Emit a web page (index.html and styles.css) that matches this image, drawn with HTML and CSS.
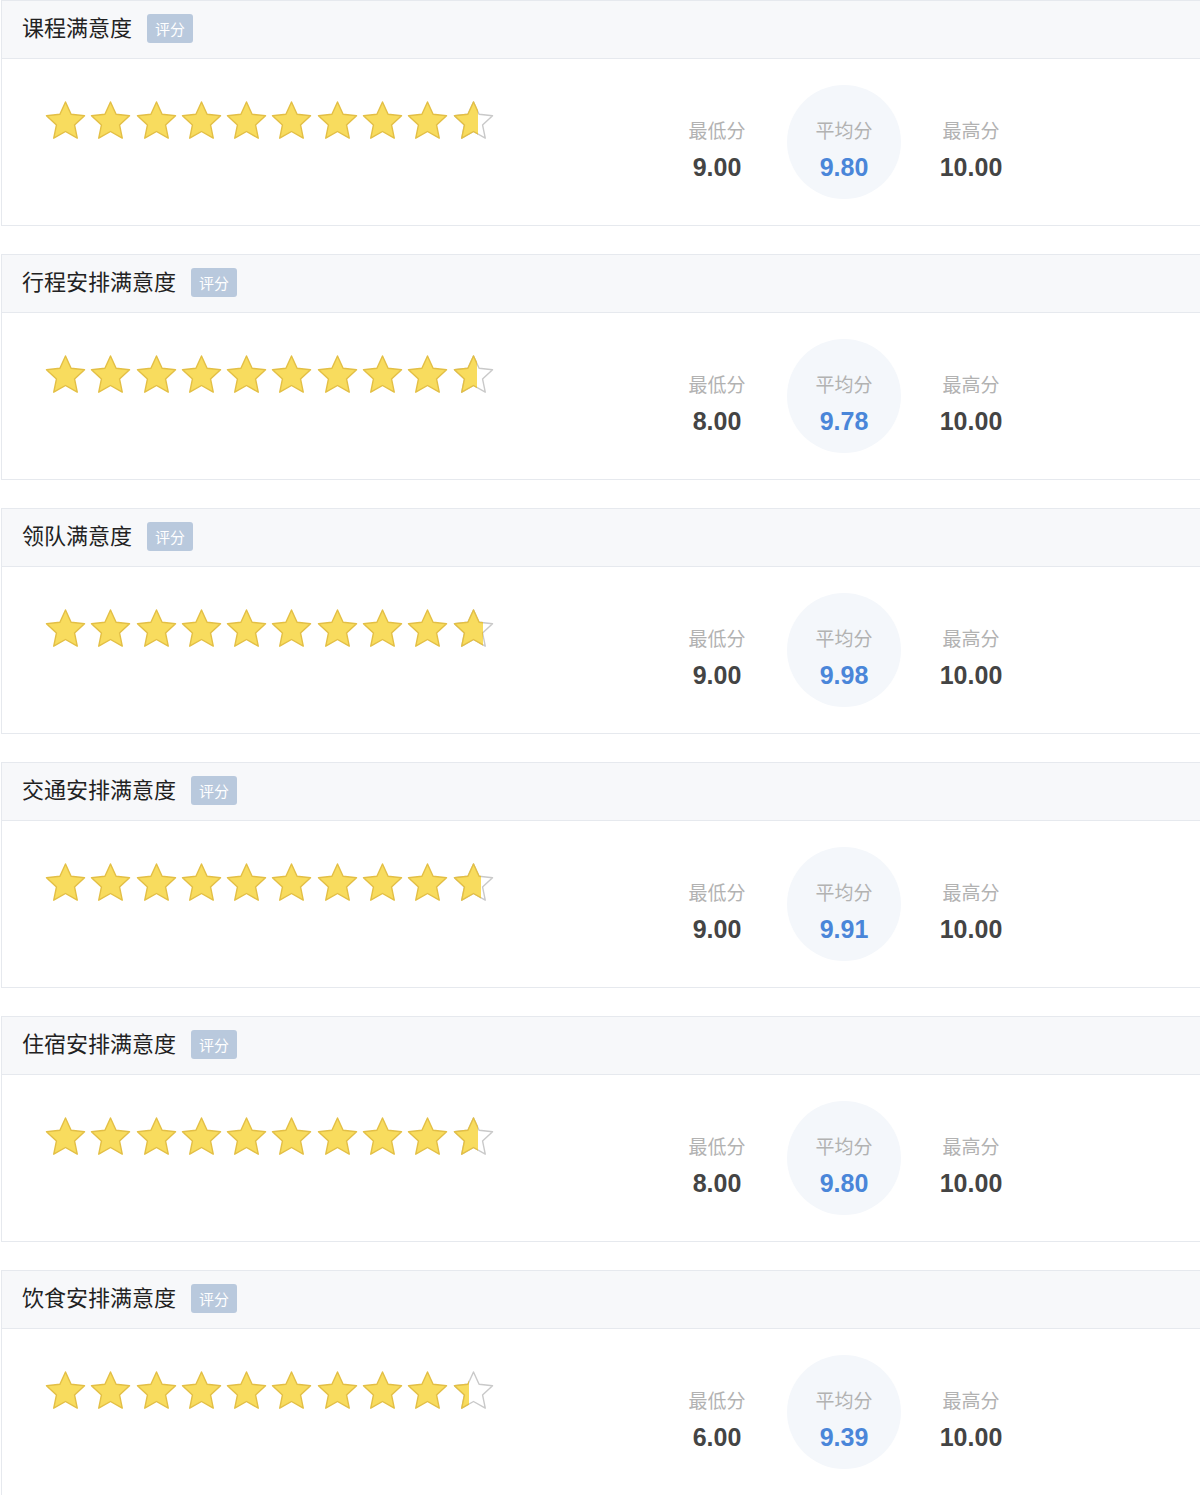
FILE: index.html
```html
<!DOCTYPE html>
<html lang="zh">
<head>
<meta charset="utf-8">
<link rel="stylesheet" href="styles.css">
</head>
<body>
<svg class="defs" width="0" height="0" aria-hidden="true">
  <defs>
    <polygon id="star" points="22.5,2 28.08,14.31 41.52,15.82 31.54,24.94 34.26,38.18 22.5,31.5 10.74,38.18 13.46,24.94 3.48,15.82 16.92,14.31"/>
  </defs>
</svg>
<div class="page">

  <section class="card">
    <div class="card-head"><span class="title">课程满意度</span><span class="badge">评分</span></div>
    <div class="card-body">
      <div class="stars">
        <svg class="star full"><use href="#star"/></svg><svg class="star full"><use href="#star"/></svg><svg class="star full"><use href="#star"/></svg><svg class="star full"><use href="#star"/></svg><svg class="star full"><use href="#star"/></svg><svg class="star full"><use href="#star"/></svg><svg class="star full"><use href="#star"/></svg><svg class="star full"><use href="#star"/></svg><svg class="star full"><use href="#star"/></svg>
        <span class="partial"><svg class="star empty"><use href="#star"/></svg><span class="clip" style="width:27px"><svg class="star full"><use href="#star"/></svg></span></span>
      </div>
      <div class="stats">
        <div class="stat"><div class="label">最低分</div><div class="value">9.00</div></div>
        <div class="stat avg"><div class="label">平均分</div><div class="value">9.80</div></div>
        <div class="stat"><div class="label">最高分</div><div class="value">10.00</div></div>
      </div>
    </div>
  </section>

  <section class="card">
    <div class="card-head"><span class="title">行程安排满意度</span><span class="badge">评分</span></div>
    <div class="card-body">
      <div class="stars">
        <svg class="star full"><use href="#star"/></svg><svg class="star full"><use href="#star"/></svg><svg class="star full"><use href="#star"/></svg><svg class="star full"><use href="#star"/></svg><svg class="star full"><use href="#star"/></svg><svg class="star full"><use href="#star"/></svg><svg class="star full"><use href="#star"/></svg><svg class="star full"><use href="#star"/></svg><svg class="star full"><use href="#star"/></svg>
        <span class="partial"><svg class="star empty"><use href="#star"/></svg><span class="clip" style="width:26.5px"><svg class="star full"><use href="#star"/></svg></span></span>
      </div>
      <div class="stats">
        <div class="stat"><div class="label">最低分</div><div class="value">8.00</div></div>
        <div class="stat avg"><div class="label">平均分</div><div class="value">9.78</div></div>
        <div class="stat"><div class="label">最高分</div><div class="value">10.00</div></div>
      </div>
    </div>
  </section>

  <section class="card">
    <div class="card-head"><span class="title">领队满意度</span><span class="badge">评分</span></div>
    <div class="card-body">
      <div class="stars">
        <svg class="star full"><use href="#star"/></svg><svg class="star full"><use href="#star"/></svg><svg class="star full"><use href="#star"/></svg><svg class="star full"><use href="#star"/></svg><svg class="star full"><use href="#star"/></svg><svg class="star full"><use href="#star"/></svg><svg class="star full"><use href="#star"/></svg><svg class="star full"><use href="#star"/></svg><svg class="star full"><use href="#star"/></svg>
        <span class="partial"><svg class="star empty"><use href="#star"/></svg><span class="clip" style="width:32px"><svg class="star full"><use href="#star"/></svg></span></span>
      </div>
      <div class="stats">
        <div class="stat"><div class="label">最低分</div><div class="value">9.00</div></div>
        <div class="stat avg"><div class="label">平均分</div><div class="value">9.98</div></div>
        <div class="stat"><div class="label">最高分</div><div class="value">10.00</div></div>
      </div>
    </div>
  </section>

  <section class="card">
    <div class="card-head"><span class="title">交通安排满意度</span><span class="badge">评分</span></div>
    <div class="card-body">
      <div class="stars">
        <svg class="star full"><use href="#star"/></svg><svg class="star full"><use href="#star"/></svg><svg class="star full"><use href="#star"/></svg><svg class="star full"><use href="#star"/></svg><svg class="star full"><use href="#star"/></svg><svg class="star full"><use href="#star"/></svg><svg class="star full"><use href="#star"/></svg><svg class="star full"><use href="#star"/></svg><svg class="star full"><use href="#star"/></svg>
        <span class="partial"><svg class="star empty"><use href="#star"/></svg><span class="clip" style="width:30.5px"><svg class="star full"><use href="#star"/></svg></span></span>
      </div>
      <div class="stats">
        <div class="stat"><div class="label">最低分</div><div class="value">9.00</div></div>
        <div class="stat avg"><div class="label">平均分</div><div class="value">9.91</div></div>
        <div class="stat"><div class="label">最高分</div><div class="value">10.00</div></div>
      </div>
    </div>
  </section>

  <section class="card">
    <div class="card-head"><span class="title">住宿安排满意度</span><span class="badge">评分</span></div>
    <div class="card-body">
      <div class="stars">
        <svg class="star full"><use href="#star"/></svg><svg class="star full"><use href="#star"/></svg><svg class="star full"><use href="#star"/></svg><svg class="star full"><use href="#star"/></svg><svg class="star full"><use href="#star"/></svg><svg class="star full"><use href="#star"/></svg><svg class="star full"><use href="#star"/></svg><svg class="star full"><use href="#star"/></svg><svg class="star full"><use href="#star"/></svg>
        <span class="partial"><svg class="star empty"><use href="#star"/></svg><span class="clip" style="width:27px"><svg class="star full"><use href="#star"/></svg></span></span>
      </div>
      <div class="stats">
        <div class="stat"><div class="label">最低分</div><div class="value">8.00</div></div>
        <div class="stat avg"><div class="label">平均分</div><div class="value">9.80</div></div>
        <div class="stat"><div class="label">最高分</div><div class="value">10.00</div></div>
      </div>
    </div>
  </section>

  <section class="card">
    <div class="card-head"><span class="title">饮食安排满意度</span><span class="badge">评分</span></div>
    <div class="card-body">
      <div class="stars">
        <svg class="star full"><use href="#star"/></svg><svg class="star full"><use href="#star"/></svg><svg class="star full"><use href="#star"/></svg><svg class="star full"><use href="#star"/></svg><svg class="star full"><use href="#star"/></svg><svg class="star full"><use href="#star"/></svg><svg class="star full"><use href="#star"/></svg><svg class="star full"><use href="#star"/></svg><svg class="star full"><use href="#star"/></svg>
        <span class="partial"><svg class="star empty"><use href="#star"/></svg><span class="clip" style="width:18px"><svg class="star full"><use href="#star"/></svg></span></span>
      </div>
      <div class="stats">
        <div class="stat"><div class="label">最低分</div><div class="value">6.00</div></div>
        <div class="stat avg"><div class="label">平均分</div><div class="value">9.39</div></div>
        <div class="stat"><div class="label">最高分</div><div class="value">10.00</div></div>
      </div>
    </div>
  </section>

</div>
</body>
</html>
```

FILE: styles.css
```css
html, body {
  margin: 0;
  padding: 0;
  background: #ffffff;
  overflow-x: hidden;
}

body {
  font-family: "Liberation Sans", "Noto Sans CJK SC", sans-serif;
}

.defs {
  position: absolute;
  width: 0;
  height: 0;
  overflow: hidden;
}

.page {
  padding-left: 1px;
  display: flex;
  flex-direction: column;
  gap: 28px;
}

.card {
  border: 1px solid #e6e9ee;
  border-right: none;
  background: #fff;
}

.card-head {
  height: 58px;
  box-sizing: border-box;
  padding-bottom: 6px;
  background: #f7f8fa;
  border-bottom: 1px solid #e6e9ee;
  display: flex;
  align-items: center;
  padding-left: 20px;
}

.title {
  font-family: "Noto Sans CJK SC", sans-serif;
  font-size: 22px;
  color: #222;
  line-height: 30px;
  margin-bottom: 2px;
}

.badge {
  margin-left: 15px;
  margin-top: 3px;
  height: 29px;
  width: 46px;
  box-sizing: border-box;
  border-radius: 3px;
  background: #b9c9dd;
  color: #ffffff;
  font-family: "Noto Sans CJK SC", sans-serif;
  font-size: 15px;
  line-height: 29px;
  text-align: center;
}

.card-body {
  height: 166px;
  display: flex;
  align-items: flex-start;
}

.stars {
  display: flex;
  padding-left: 41px;
  padding-top: 41px;
  width: 453px;
}

.star {
  width: 45.3px;
  height: 42px;
  flex: none;
  display: block;
  overflow: visible;
}

.star use {
  stroke-width: 1.4;
  stroke-linejoin: round;
}

.star.full use {
  fill: #f8dc5e;
  stroke: #e3bf45;
}

.star.empty use {
  fill: #ffffff;
  stroke: #c9c9c9;
}

.partial {
  position: relative;
  display: block;
  width: 45.3px;
  height: 42px;
}

.clip {
  position: absolute;
  left: 0;
  top: 0;
  height: 42px;
  overflow: hidden;
}

.stats {
  margin-left: 164px;
  align-self: center;
  display: flex;
  gap: 13px;
}

.stat {
  width: 114px;
  height: 114px;
  box-sizing: border-box;
  padding-top: 32px;
  display: flex;
  flex-direction: column;
  align-items: center;
}

.stat.avg {
  background: #f4f7fb;
  border-radius: 50%;
}

.label {
  font-family: "Noto Sans CJK SC", sans-serif;
  font-size: 19px;
  line-height: 26px;
  color: #b2b2b2;
}

.value {
  margin-top: 9px;
  font-family: "Liberation Sans", Arial, sans-serif;
  font-weight: bold;
  font-size: 25px;
  line-height: 30px;
  color: #444444;
}

.stat.avg .value {
  color: #4a86d9;
}
```
